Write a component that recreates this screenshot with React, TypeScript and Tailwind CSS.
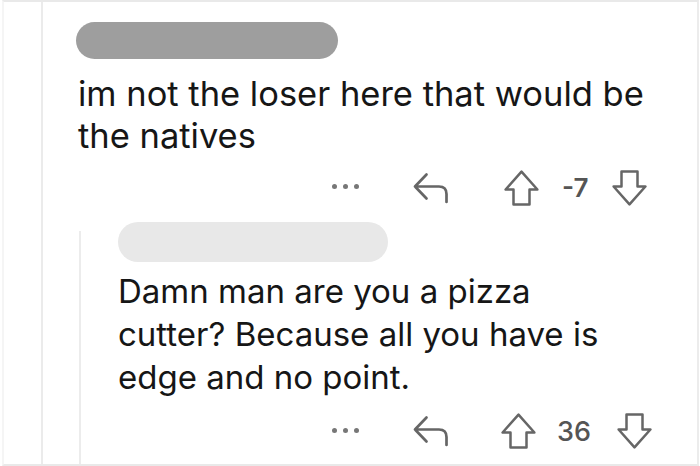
import React from 'react';

// outline arrows used for votes and reply
const ReplyIcon = () => (
  <svg width="36" height="32" viewBox="0 0 36 32" fill="none" stroke="#666" strokeWidth="2.7" strokeLinecap="round" strokeLinejoin="round">
    <path d="M13.5 2.5 L2 14.5 L13.5 26.5 M2 14.5 H26 Q33.5 14.5 33.5 22 V30" />
  </svg>
);

const UpIcon = ({ down = false }: { down?: boolean }) => (
  <svg width="35" height="36" viewBox="0 0 35 36" fill="none" stroke="#666" strokeWidth="2.5" strokeLinejoin="round" className={down ? 'rotate-180' : ''}>
    <path d="M17.5 1.6 L1.6 19.5 H9.5 V34.5 H25.5 V19.5 H33.4 Z" />
  </svg>
);

const Dots = () => (
  <div className="flex items-center gap-[6px]">
    <span className="h-[5px] w-[5px] rounded-full bg-[#777]" />
    <span className="h-[5px] w-[5px] rounded-full bg-[#777]" />
    <span className="h-[5px] w-[5px] rounded-full bg-[#777]" />
  </div>
);

export default function App() {
  return (
    <div className="h-[466px] w-[700px] bg-white font-['Inter','Liberation_Sans',sans-serif] text-[#161616]">
      <div className="ml-[2px] flex h-[466px] w-[697px] border-t-2 border-r-2 border-b-2 border-l-2 border-t-[#e9e9e9] border-r-[#ececec] border-b-[#e9e9e9] border-l-[#f5f5f5] pl-[37px]">
        {/* parent thread line */}
        <div className="w-[2px] bg-[#ebebeb]" />

        <div className="flex flex-1 flex-col pl-[33px]">
          <div className="mt-[20px] h-[37px] w-[262px] rounded-full bg-[#9e9e9e]" />
          <p className="mt-[14px] pl-[2px] text-[34.5px] leading-[42px]">
            im not the loser here that would be
            <br />
            the natives
          </p>

          <div className="mt-[13px] flex h-[36px] items-center">
            <div className="ml-[256px] -mt-[3px]">
              <Dots />
            </div>
            <div className="ml-[54px]">
              <ReplyIcon />
            </div>
            <div className="ml-[55px]">
              <UpIcon />
            </div>
            <span className="ml-[23px] w-[29px] text-[26px] leading-[26px] font-semibold text-[#555]">-7</span>
            <div className="ml-[21px]">
              <UpIcon down />
            </div>
          </div>

          {/* nested reply */}
          <div className="mt-[16px] ml-[3px] flex flex-1">
            <div className="mt-[9px] w-[2px] bg-[#ececec]" />
            <div className="flex flex-1 flex-col pl-[37px]">
              <div className="h-[40px] w-[270px] rounded-full bg-[#e8e8e8]" />
              <p className="mt-[8px] text-[33px] leading-[43px]">
                Damn man are you a pizza
                <br />
                cutter? Because all you have is
                <br />
                edge and no point.
              </p>

              <div className="mt-[15px] flex h-[34px] items-center">
                <div className="ml-[214px] -mt-[2px]">
                  <Dots />
                </div>
                <div className="ml-[54px]">
                  <ReplyIcon />
                </div>
                <div className="ml-[52px]">
                  <UpIcon />
                </div>
                <span className="ml-[21px] w-[37px] text-[27px] leading-[27px] font-medium text-[#555]">36</span>
                <div className="ml-[23px]">
                  <UpIcon down />
                </div>
              </div>
            </div>
          </div>
        </div>
      </div>
    </div>
  );
}
